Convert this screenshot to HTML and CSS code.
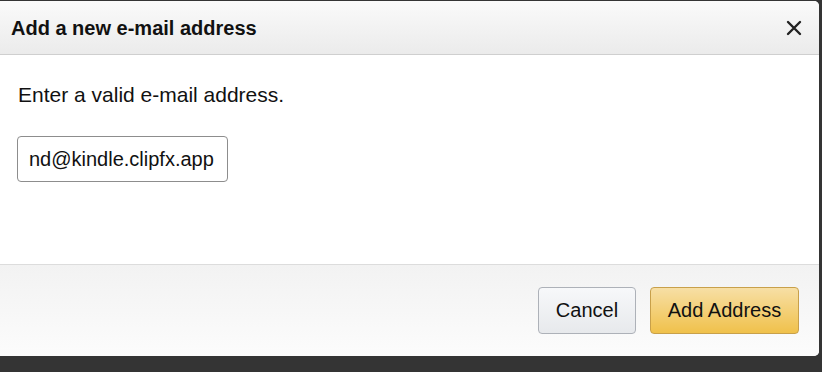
FILE: index.html
```html
<!DOCTYPE html>
<html>
<head>
<meta charset="utf-8">
<link rel="stylesheet" href="styles.css">
</head>
<body>
<div class="dialog">
  <div class="header">
    <span class="title">Add a new e-mail address</span>
    <span class="close" aria-label="Close">
      <svg width="16" height="16" viewBox="0 0 16 16"><path d="M2 2L14 14M14 2L2 14" stroke="#222" stroke-width="2.4" stroke-linecap="round"/></svg>
    </span>
  </div>
  <div class="body">
    <p class="label">Enter a valid e-mail address.</p>
    <div class="input">nd@kindle.clipfx.app</div>
  </div>
  <div class="footer">
    <button class="btn btn-cancel">Cancel</button>
    <button class="btn btn-primary">Add Address</button>
  </div>
</div>
</body>
</html>
```
FILE: styles.css
```css
html, body {
  margin: 0;
  padding: 0;
}
body {
  background: #343434;
  font-family: "Liberation Sans", Arial, sans-serif;
  width: 822px;
  height: 372px;
  overflow: hidden;
  padding-top: 1px;
  box-sizing: border-box;
}
.dialog {
  width: 819px;
  height: 355px;
  background: #fff;
  border-radius: 0 5px 5px 0;
  display: flex;
  flex-direction: column;
  overflow: hidden;
}
.header {
  height: 53px;
  background: linear-gradient(#fafafa, #ebebeb);
  border-bottom: 1px solid #cfcfcf;
  display: flex;
  align-items: center;
  justify-content: space-between;
  padding: 0 17px 0 11px;
  flex: none;
}
.title {
  font-weight: bold;
  font-size: 20px;
  color: #111;
  margin-top: 1px;
}
.close {
  display: flex;
  margin-top: 1px;
}
.body {
  flex: 1;
  padding: 0 17px;
}
.label {
  margin: 29px 0 0 1px;
  font-size: 21px;
  color: #111;
  line-height: 22px;
}
.input {
  margin-top: 30px;
  width: 187px;
  height: 44px;
  border: 1px solid #8d8d8d;
  border-radius: 4px;
  padding: 0 11px;
  font-size: 20px;
  color: #111;
  display: flex;
  align-items: center;
}
.footer {
  height: 92px;
  flex: none;
  border-top: 1px solid #dcdcdc;
  background: linear-gradient(#f2f2f2, #fcfcfc);
  display: flex;
  justify-content: flex-end;
  align-items: flex-start;
  gap: 14px;
  padding: 22px 20px 0 0;
  box-sizing: border-box;
}
.btn {
  height: 47px;
  border-radius: 4px;
  font-family: "Liberation Sans", Arial, sans-serif;
  font-size: 20px;
  color: #111;
  padding: 0;
  cursor: pointer;
}
.btn-cancel {
  width: 98px;
  border: 1px solid #adb1b8;
  background: linear-gradient(#f7f8fa, #e7e9ec);
}
.btn-primary {
  width: 149px;
  border: 1px solid #c8a04a;
  background: linear-gradient(#f7dfa5, #f0c14b);
}
```
